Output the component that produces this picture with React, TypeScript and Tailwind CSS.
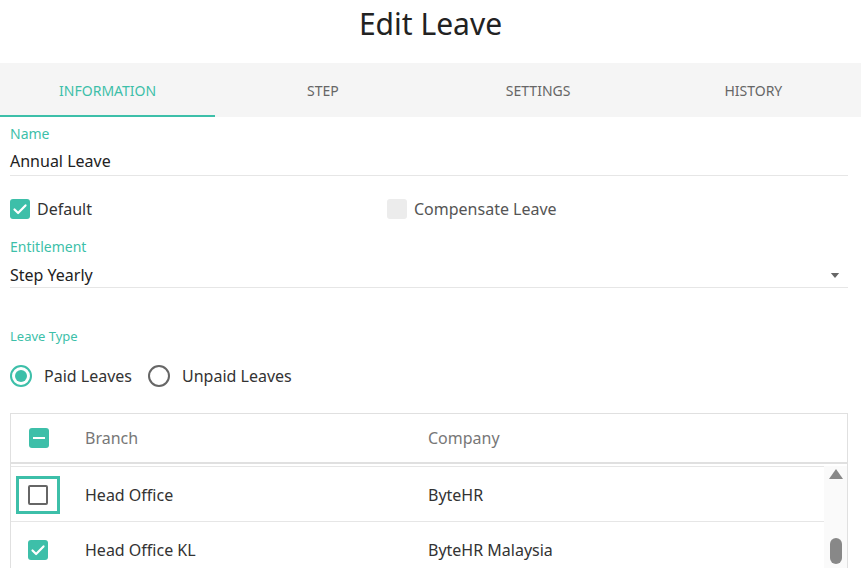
import React from 'react';

function CheckMark() {
  return (
    <svg viewBox="0 0 20 20" className="h-[20px] w-[20px]" aria-hidden="true">
      <path d="M4.5 10.5l3.6 3.5 7.4-7.6" fill="none" stroke="white" strokeWidth="2.2" strokeLinecap="round" strokeLinejoin="round" />
    </svg>
  );
}

function Radio({ on, label }: { on: boolean; label: string }) {
  return (
    <label className="flex items-center gap-[12px]">
      <span
        className={
          on
            ? 'flex h-[22px] w-[22px] items-center justify-center rounded-full border-2 border-[#3dbfa9]'
            : 'flex h-[22px] w-[22px] items-center justify-center rounded-full border-2 border-[#666]'
        }
      >
        {on && <span className="h-[12px] w-[12px] rounded-full bg-[#3dbfa9]" />}
      </span>
      <span className="text-[16px] text-[#333]">{label}</span>
    </label>
  );
}

const tabs = ['INFORMATION', 'STEP', 'SETTINGS', 'HISTORY'];

const rows = [
  { branch: 'Head Office', company: 'ByteHR', checked: false, focused: true },
  { branch: 'Head Office KL', company: 'ByteHR Malaysia', checked: true, focused: false },
];

export default function App() {
  return (
    <div className="h-[568px] w-[861px] overflow-hidden bg-white font-['Noto_Sans',sans-serif] text-[#222]">
      <h1 className="h-[63px] pt-[2px] text-center text-[30px] leading-[44px] text-[#222]">Edit Leave</h1>

      <div className="grid h-[54px] grid-cols-4 bg-[#f5f5f5]">
        {tabs.map((tab, i) => (
          <div
            key={tab}
            className={
              i === 0
                ? 'flex items-center justify-center border-b-2 border-[#3dbfa9] pt-[2px] text-[14px] text-[#3dbfa9]'
                : 'flex items-center justify-center border-b-2 border-transparent pt-[2px] text-[14px] text-[#666]'
            }
          >
            {tab}
          </div>
        ))}
      </div>

      <div className="pl-[10px] pr-[13px]">
        {/* Name */}
        <div className="mt-[7px] text-[14px] leading-[20px] text-[#3dbfa9]">Name</div>
        <div className="border-b border-[#e6e6e6] pb-[2px] pt-[5px] text-[16px] leading-[24px]">Annual Leave</div>

        {/* checkboxes */}
        <div className="mt-[23px] flex h-[20px] items-center">
          <label className="flex w-[377px] items-center gap-[7px]">
            <span className="flex h-[20px] w-[20px] items-center justify-center rounded-[3px] bg-[#3dbfa9]">
              <CheckMark />
            </span>
            <span className="text-[16px] text-[#333]">Default</span>
          </label>
          <label className="flex items-center gap-[7px]">
            <span className="h-[20px] w-[20px] rounded-[3px] bg-[#ececec]" />
            <span className="text-[16px] text-[#555]">Compensate Leave</span>
          </label>
        </div>

        {/* Entitlement */}
        <div className="mt-[18px] text-[14px] leading-[20px] text-[#3dbfa9]">Entitlement</div>
        <div className="flex items-center justify-between border-b border-[#e6e6e6] pt-[6px] text-[16px] leading-[24px]">
          <span>Step Yearly</span>
          <svg viewBox="0 0 10 6" className="mr-[8px] h-[5px] w-[10px]" aria-hidden="true">
            <path d="M0 0h10L5 6z" fill="#666" />
          </svg>
        </div>

        {/* Leave type */}
        <div className="mt-[39px] text-[13px] leading-[18px] text-[#3dbfa9]">Leave Type</div>
        <div className="mt-[19px] flex items-center gap-[16px]">
          <Radio on label="Paid Leaves" />
          <Radio on={false} label="Unpaid Leaves" />
        </div>

        {/* Table */}
        <div className="mt-[25px] border border-[#e0e0e0]">
          <div className="flex h-[50px] items-center border-b-2 border-[#e0e0e0] text-[16px] text-[#777]">
            <div className="w-[74px] pl-[18px]">
              <span className="flex h-[20px] w-[20px] items-center justify-center rounded-[3px] bg-[#3dbfa9]">
                <span className="h-[2px] w-[12px] bg-white" />
              </span>
            </div>
            <div className="w-[343px]">Branch</div>
            <div>Company</div>
          </div>
          <div className="mt-[2px] flex">
            <div className="flex-1 border-t border-[#e6e6e6]">
              {rows.map((row) => (
                <div key={row.branch} className="flex h-[55px] items-center border-b border-[#e6e6e6] pt-[2px] text-[16px] text-[#333]">
                  <div className="w-[74px] pl-[5px]">
                    <span
                      className={
                        row.focused
                          ? 'flex h-[38px] w-[44px] items-center justify-center border-[3px] border-[#3dbfa9]'
                          : 'flex h-[38px] w-[44px] items-center justify-center border-[3px] border-transparent'
                      }
                    >
                      {row.checked ? (
                        <span className="flex h-[20px] w-[20px] items-center justify-center rounded-[3px] bg-[#3dbfa9]">
                          <CheckMark />
                        </span>
                      ) : (
                        <span className="h-[20px] w-[20px] rounded-[2px] border-2 border-[#666]" />
                      )}
                    </span>
                  </div>
                  <div className="w-[343px]">{row.branch}</div>
                  <div>{row.company}</div>
                </div>
              ))}
            </div>
            <div className="flex w-[23px] flex-col items-center bg-[#fafafa] pt-[3px]">
              <svg viewBox="0 0 14 10" className="h-[10px] w-[14px]" aria-hidden="true">
                <path d="M7 0l7 10H0z" fill="#888" />
              </svg>
              <span className="mt-[59px] h-[26px] w-[12px] rounded-full bg-[#888]" />
            </div>
          </div>
        </div>
      </div>
    </div>
  );
}
